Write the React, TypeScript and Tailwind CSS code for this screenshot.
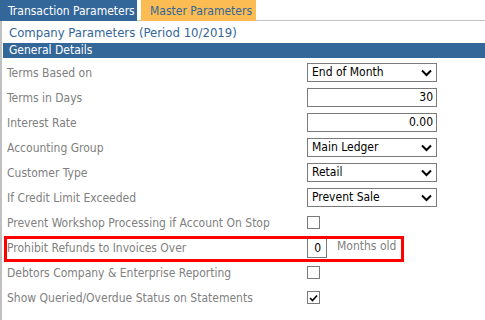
import React from "react";

const font = { fontFamily: '"DejaVu Sans Condensed", "DejaVu Sans", sans-serif', fontStretch: "condensed" };

function Chevron() {
    return (
        <svg width="11" height="8" viewBox="0 0 11 8" className="absolute right-[4px] top-[5px]">
            <polyline points="1,1.5 5.5,6 10,1.5" fill="none" stroke="#000" strokeWidth="2" />
        </svg>
    );
}

function SelectBox({ value }: { value: string }) {
    return (
        <div className="relative h-[19px] w-[130px] border border-[#7a7a7a] bg-white pl-[4px] text-[12px] leading-[17px] text-black">
            {value}
            <Chevron />
        </div>
    );
}

function NumberBox({ value }: { value: string }) {
    return (
        <div className="h-[19px] w-[130px] border border-[#7a7a7a] bg-white pr-[3px] text-right text-[12px] leading-[17px] text-black">
            {value}
        </div>
    );
}

function CheckBox({ checked }: { checked?: boolean }) {
    return (
        <div className="flex h-[13px] w-[13px] items-center justify-center border border-[#7a7a7a] bg-white">
            {checked && (
                <svg width="9" height="8" viewBox="0 0 9 8">
                    <polyline points="1,4 3.5,6.5 8,1.5" fill="none" stroke="#000" strokeWidth="1.6" />
                </svg>
            )}
        </div>
    );
}

const rows: { label: string; control: React.ReactNode; highlight?: boolean }[] = [
    { label: "Terms Based on", control: <SelectBox value="End of Month" /> },
    { label: "Terms in Days", control: <NumberBox value="30" /> },
    { label: "Interest Rate", control: <NumberBox value="0.00" /> },
    { label: "Accounting Group", control: <SelectBox value="Main Ledger" /> },
    { label: "Customer Type", control: <SelectBox value="Retail" /> },
    { label: "If Credit Limit Exceeded", control: <SelectBox value="Prevent Sale" /> },
    { label: "Prevent Workshop Processing if Account On Stop", control: <CheckBox /> },
    {
        label: "Prohibit Refunds to Invoices Over",
        highlight: true,
        control: (
            <div className="flex items-start gap-[10px]">
                <div className="h-[21px] w-[20px] border border-[#7a7a7a] bg-white pt-[3px] pr-[5px] text-right text-[12px] leading-[14px] text-black">
                    0
                </div>
                <span className="text-[12px] leading-[18px] text-[#808080]">Months old</span>
            </div>
        ),
    },
    { label: "Debtors Company & Enterprise Reporting", control: <CheckBox /> },
    { label: "Show Queried/Overdue Status on Statements", control: <CheckBox checked /> },
];

export default function App() {
    return (
        <div className="h-[320px] w-[485px] overflow-hidden bg-white" style={font}>
            <div className="flex h-[21px]">
                <div className="flex h-[21px] w-[137px] items-center bg-[#336699] pl-[8px] text-[12px] text-white">
                    Transaction Parameters
                </div>
                <div className="w-[4px] border-b border-[#c0c0c0]" />
                <div className="flex h-[21px] w-[115px] items-center bg-[#fbbd53] pl-[9px] text-[12px] text-[#336699]">
                    Master Parameters
                </div>
                <div className="flex-1 border-b border-[#c0c0c0]" />
            </div>
            <div className="h-[299px] border-l-2 border-[#c0c0c0] pl-[1px]">
                <div className="h-[22px] pl-[6px] pt-[3px] text-[13px] leading-[17px] text-[#336699]">
                    Company Parameters (Period 10/2019)
                </div>
                <div className="h-[15px] bg-[#336699] pl-[6px] text-[12px] leading-[15px] text-white">
                    General Details
                </div>
                <div className="pt-[2px]">
                    {rows.map((row) => (
                        <div key={row.label} className="relative flex h-[25px] items-center">
                            <div className="w-[304px] pl-[4px] text-[12px] text-[#808080]">{row.label}</div>
                            <div>{row.control}</div>
                            {row.highlight && (
                                <div className="pointer-events-none absolute left-[1px] top-[1px] h-[26px] w-[400px] border-[3px] border-[#ff0000]" />
                            )}
                        </div>
                    ))}
                </div>
            </div>
        </div>
    );
}
